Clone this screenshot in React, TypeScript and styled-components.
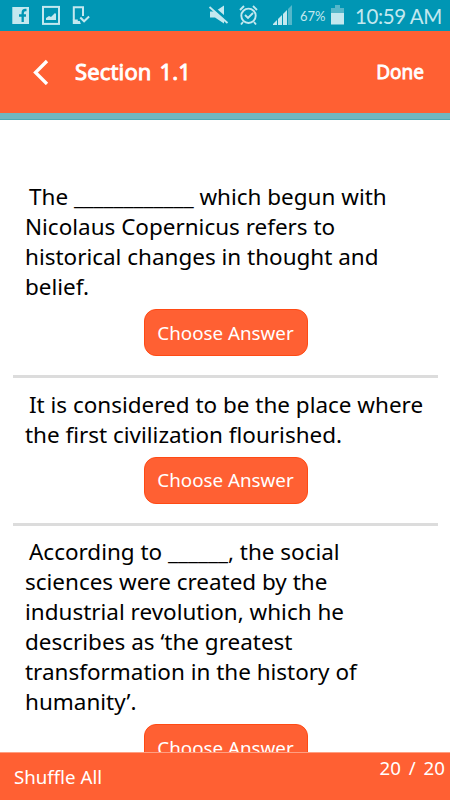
import React from "react";
import styled, { createGlobalStyle } from "styled-components";

const Global = createGlobalStyle`
  * { box-sizing: border-box; }
  html, body { margin: 0; padding: 0; background: #fff; }
  body { font-family: "Noto Sans", "Open Sans", sans-serif; overflow: hidden; }
`;

const Screen = styled.div`
  width: 450px;
  height: 800px;
  display: flex;
  flex-direction: column;
  background: #fff;
  overflow: hidden;
`;

const StatusBar = styled.div`
  height: 31px;
  flex: none;
  display: flex;
  align-items: flex-start;
  justify-content: space-between;
  background: #0096b4;
  color: #c3e8ef;
`;

const StatusIcons = styled.svg`
  display: block;
  flex: none;
`;

const StatusInfo = styled.div`
  display: flex;
  height: 31px;
`;

const Percent = styled.span`
  width: 30px;
  font: 13px/31px Lato, sans-serif;
  padding-top: 1px;
  white-space: nowrap;
`;

const Clock = styled.span`
  width: 96px;
  padding-left: 1px;
  font: 20.5px/33px Lato, sans-serif;
  letter-spacing: -0.4px;
  white-space: nowrap;
`;

const Header = styled.header`
  height: 82px;
  flex: none;
  display: flex;
  align-items: center;
  padding: 0 26px 0 32px;
  background: #ff6033;
  color: #fff;
`;

const Title = styled.h1`
  flex: 1;
  margin: 0 0 2px 26px;
  font-size: 22px;
  font-weight: 400;
  line-height: 30px;
  word-spacing: 2px;
  letter-spacing: 0.15px;
  -webkit-text-stroke: 0.9px #fff;
`;

const Done = styled.span`
  font-size: 19px;
  font-weight: 400;
  line-height: 26px;
  -webkit-text-stroke: 0.8px #fff;
`;

const Accent = styled.div`
  height: 7px;
  flex: none;
  background: #70b7c0;
  border-bottom: 1px solid #4fa9b4;
`;

const List = styled.main`
  flex: 1;
  min-height: 0;
  overflow: hidden;
  padding: 62px 12px 0 13px;
`;

const Card = styled.section`
  display: flex;
  flex-direction: column;
  align-items: center;
  border-bottom: 3px solid #dcdcdc;
  padding-bottom: 19px;
  margin-bottom: 11.6px;
`;

const Question = styled.p`
  width: 100%;
  margin: 0 0 7px;
  padding-left: 12px;
  font-size: 22.48px;
  line-height: 30px;
  color: #000;
`;

const Line = styled.span<{ $first: boolean }>`
  display: block;
  white-space: nowrap;
  padding-left: ${(p) => (p.$first ? 4 : 0)}px;
`;

const Choose = styled.button`
  width: 164px;
  height: 47px;
  padding: 0;
  border: 1px solid #ff4a14;
  border-radius: 12px;
  background: #ff6033;
  color: #fff;
  font-family: inherit;
  font-size: 18.8px;
  line-height: 26px;
  white-space: nowrap;
`;

const Footer = styled.footer`
  height: 48px;
  flex: none;
  display: flex;
  justify-content: space-between;
  padding: 0 5px 0 14px;
  background: #ff6033;
  border-top: 1px solid #ff9f82;
  color: #fff;
`;

const Shuffle = styled.span`
  margin-top: 10px;
  font-size: 18.7px;
  line-height: 28px;
`;

const Counter = styled.span`
  margin-top: 2px;
  font-size: 18.7px;
  line-height: 26px;
  word-spacing: 3px;
`;

const questions: string[][] = [
  [
    "The ____________ which begun with",
    "Nicolaus Copernicus refers to",
    "historical changes in thought and",
    "belief.",
  ],
  [
    "It is considered to be the place where",
    "the first civilization flourished.",
  ],
  [
    "According to ______, the social",
    "sciences were created by the",
    "industrial revolution, which he",
    "describes as ‘the greatest",
    "transformation in the history of",
    "humanity’.",
  ],
];

function Notifications() {
  return (
    <StatusIcons width="100" height="31" viewBox="0 0 100 31">
      <rect x="12.3" y="7" width="16.7" height="17" fill="#c3e8ef" />
      <path d="M26.5 10h-1.2c-2 0-2.6 1.1-2.6 3v9M19 15.5h7" fill="none" stroke="#0096b4" strokeWidth="2.3" />
      <rect x="43" y="6.9" width="16" height="17" fill="none" stroke="#c3e8ef" strokeWidth="2" />
      <path d="M46 20v-2l3-2 2 1 4-4 1 1v6z" fill="#c3e8ef" />
      <path d="M83 16V7.2h-9.2v13" fill="none" stroke="#c3e8ef" strokeWidth="2" />
      <path d="M72.8 19.5h5v1.5h2l1 3h-8z" fill="#c3e8ef" />
      <path d="M80.3 17.5l3.8 3.8 5-4.8" fill="none" stroke="#c3e8ef" strokeWidth="2" />
    </StatusIcons>
  );
}

function Indicators() {
  return (
    <StatusIcons width="92" height="31" viewBox="209 0 92 31">
      <path d="M211 11.5h5l9-6v18l-9-6h-5z" fill="#c3e8ef" />
      <path d="M211 5l19 16.5" stroke="#0096b4" strokeWidth="3" />
      <path d="M210.5 7l18 16" stroke="#c3e8ef" strokeWidth="1.8" />
      <circle cx="249.5" cy="15.8" r="7.2" fill="none" stroke="#c3e8ef" strokeWidth="1.9" />
      <path d="M246 15l3 3 5-5M241 10l4-4M254 6l4 4M244 22l-2 2.5M255 22l2 2.5" fill="none" stroke="#c3e8ef" strokeWidth="1.9" />
      <path d="M274 25v-1l4-4v5zM279 25v-6l4-4v10z" fill="#c3e8ef" />
      <path d="M284 25V14l4-4v15z" fill="#c3e8ef" />
      <path d="M289 25V9l4-4v20z" fill="#55b7ca" />
    </StatusIcons>
  );
}

function Battery() {
  return (
    <StatusIcons width="24" height="31" viewBox="331 0 24 31">
      <path d="M336 5h5v3h4v5h-13V8h4z" fill="#55b7ca" />
      <path d="M332 13h13v11.5h-13z" fill="#c3e8ef" />
    </StatusIcons>
  );
}

export default function App() {
  return (
    <Screen>
      <Global />
      <StatusBar>
        <Notifications />
        <StatusInfo>
          <Indicators />
          <Percent>67%</Percent>
          <Battery />
          <Clock>10:59 AM</Clock>
        </StatusInfo>
      </StatusBar>
      <Header>
        <svg width="17" height="26" viewBox="0 0 17 26">
          <path d="M15 2L3.5 13.5 15 25" fill="none" stroke="#fff" strokeWidth="3.3" />
        </svg>
        <Title>Section 1.1</Title>
        <Done>Done</Done>
      </Header>
      <Accent />
      <List>
        {questions.map((lines, i) => (
          <Card key={i}>
            <Question>
              {lines.map((text, j) => (
                <Line key={j} $first={j === 0}>
                  {text}
                </Line>
              ))}
            </Question>
            <Choose>Choose Answer</Choose>
          </Card>
        ))}
      </List>
      <Footer>
        <Shuffle>Shuffle All</Shuffle>
        <Counter>20 / 20</Counter>
      </Footer>
    </Screen>
  );
}
